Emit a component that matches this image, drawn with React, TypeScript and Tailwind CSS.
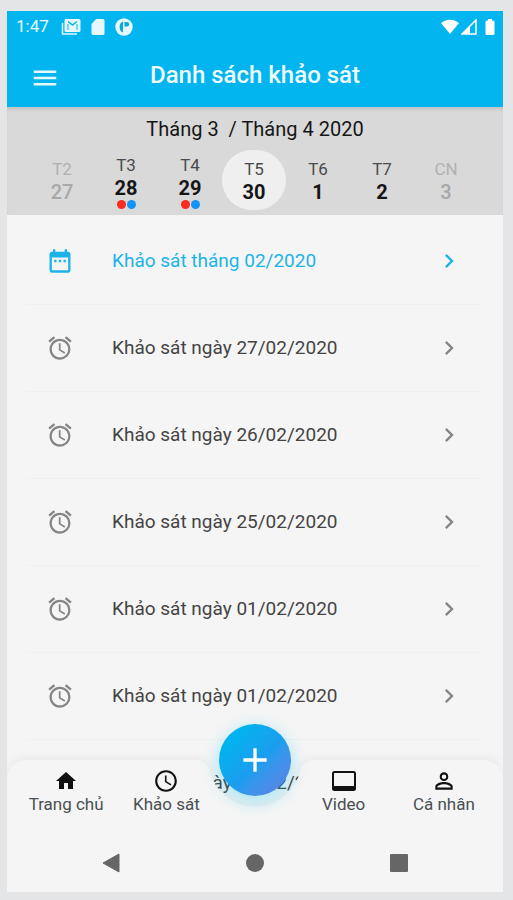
import type { ReactNode } from "react";
import {
  MdAccessTime,
  MdAdd,
  MdAlarm,
  MdChevronRight,
  MdDateRange,
  MdHome,
  MdMenu,
  MdPersonOutline,
} from "react-icons/md";

type Day = { name: string; date: number; state?: "muted" | "selected"; marked?: boolean };

const days: Day[] = [
  { name: "T2", date: 27, state: "muted" },
  { name: "T3", date: 28, marked: true },
  { name: "T4", date: 29, marked: true },
  { name: "T5", date: 30, state: "selected" },
  { name: "T6", date: 1 },
  { name: "T7", date: 2 },
  { name: "CN", date: 3, state: "muted" },
];

const surveys = [
  { title: "Khảo sát tháng 02/2020", monthly: true },
  { title: "Khảo sát ngày 27/02/2020" },
  { title: "Khảo sát ngày 26/02/2020" },
  { title: "Khảo sát ngày 25/02/2020" },
  { title: "Khảo sát ngày 01/02/2020" },
  { title: "Khảo sát ngày 01/02/2020" },
  { title: "Khảo sát ngày 01/02/2020" },
];

function StatusBar() {
  return (
    <div className="flex h-8 items-center pr-2 pl-[9px] text-[17px] text-white/90">
      <span>1:47</span>
      <div className="ml-3 flex items-center gap-2">
        <svg viewBox="0 0 20 18" className="h-[18px] w-5">
          <path d="M1.500 5v11H16" fill="none" stroke="currentColor" strokeWidth="1.500" />
          <rect x="3.500" y="1" width="16" height="13" rx="1.500" fill="currentColor" />
          <path d="M7 3.500l4.500 3.500L16 3.500" fill="none" stroke="#03b5ef" strokeWidth="1.500" />
          <path d="M7 6v6M16 6v6" fill="none" stroke="#03b5ef" />
        </svg>
        <svg viewBox="0 0 18 18" className="size-[18px]" fill="currentColor">
          <path d="M7 1h7a1.500 1.500 0 0 1 1.500 1.500v13A1.500 1.500 0 0 1 14 17H4a1.500 1.500 0 0 1-1.500-1.500V6z" />
        </svg>
        <svg viewBox="0 0 18 18" className="size-[18px]">
          <circle cx="9" cy="9" r="8.700" fill="currentColor" />
          <path
            d="M8 3.500C3.500 4.500 3.500 13.500 8 14.500zM9.500 4H12a2.200 2.200 0 0 1 0 4.400H9.500z"
            fill="#03a9e3"
          />
        </svg>
      </div>
      <div className="ml-auto flex items-center text-white">
        <svg viewBox="0 0 18 16" className="h-4 w-[18px]" fill="currentColor">
          <path d="M0 4C5-.5 13-.5 18 4L9 15z" />
        </svg>
        <svg viewBox="0 0 16 16" className="ml-[2px] size-4">
          <path d="M15 1v14H1z" fill="none" stroke="currentColor" strokeWidth="1.500" />
          <path d="M9 7v8H1z" fill="currentColor" />
        </svg>
        <svg viewBox="0 0 10 16" className="ml-2 h-4 w-[10px]" fill="currentColor">
          <path d="M3 0h4v1.500h1a1.500 1.500 0 0 1 1.500 1.500v11.500A1.500 1.500 0 0 1 8 16H2a1.500 1.500 0 0 1-1.500-1.500V3A1.500 1.500 0 0 1 2 1.500h1z" />
        </svg>
      </div>
    </div>
  );
}

function DayCell({ name, date, state, marked }: Day) {
  const muted = state === "muted";
  return (
    <button
      type="button"
      className={`flex h-[60px] flex-1 flex-col items-center rounded-full ${marked ? "pt-1" : "pt-2"} ${
        state === "selected" ? "bg-[#efefef]" : ""
      }`}
    >
      <span className={`text-[17px] leading-[23px] ${muted ? "text-[#b0b0b0]" : "text-[#4a4a4a]"}`}>{name}</span>
      <span
        className={`text-[20px] leading-[23px] ${muted ? "font-medium text-[#a8a8a8]" : "font-bold text-[#161616]"}`}
      >
        {date}
      </span>
      {marked && (
        <span className="flex gap-px">
          <span className="size-[9px] rounded-full bg-[#f92c22]" />
          <span className="size-[9px] rounded-full bg-[#1593f5]" />
        </span>
      )}
    </button>
  );
}

function NavItem({ label, icon }: { label: string; icon: ReactNode }) {
  return (
    <button type="button" className="flex flex-1 flex-col items-center pt-2 text-[#111]">
      <span className="flex h-[26px] items-center">{icon}</span>
      <span className="text-[17px] leading-5 whitespace-nowrap text-[#4a4f52]">{label}</span>
    </button>
  );
}

export default function App() {
  return (
    <div className="min-h-screen bg-[#e4e5e7] pt-[11px] pr-[10px] pb-2 pl-[7px] font-[Roboto,'Noto_Sans',sans-serif]">
      <div className="overflow-hidden bg-[#f5f5f5]">
        <header className="bg-[#03b5ef]">
          <StatusBar />
          <div className="grid h-16 grid-cols-[56px_1fr_56px] items-center">
            <button type="button" aria-label="Menu" className="pt-1.5 pl-[23px] text-[30px] text-white/90">
              <MdMenu />
            </button>
            <h1 className="text-center text-[24px] font-medium text-white/95">Danh sách khảo sát</h1>
          </div>
        </header>

        <section className="h-[108px] bg-[#d9d9d9] pt-2 shadow-[inset_0_4px_4px_-2px_rgba(0,0,0,0.12)]">
          <h2 className="h-[35px] text-center text-[20px] leading-7 whitespace-pre text-[#161616]">
            {"Tháng 3  / Tháng 4 2020"}
          </h2>
          <div className="flex pr-[25px] pl-[23px]">
            {days.map((day) => (
              <DayCell key={day.name} {...day} />
            ))}
          </div>
        </section>

        <ul className="px-5 pt-[3px]">
          {surveys.map((survey, index) => (
            <li key={index} className="h-[87px] border-b border-[#f0f0f0]">
              <a
                href="#survey"
                className={`flex h-full items-center pr-5 pl-[19px] text-[19px] ${
                  survey.monthly ? "text-[#1cb4e8]" : "text-[#444]"
                }`}
              >
                <span className={`text-[28px] ${survey.monthly ? "" : "text-[#858585]"}`}>
                  {survey.monthly ? <MdDateRange /> : <MdAlarm />}
                </span>
                <span className="flex-1 pl-[38px]">{survey.title}</span>
                <MdChevronRight className={`text-[28px] ${survey.monthly ? "" : "text-[#858585]"}`} />
              </a>
            </li>
          ))}
        </ul>

        <nav className="relative -mt-[67px] h-[74px]">
          <div className="absolute inset-0 flex drop-shadow-[0_-2px_5px_rgba(0,0,0,0.05)]">
            <div className="flex-1 rounded-tl-[20px] rounded-tr-[14px] bg-[#f5f5f5]" />
            <div className="w-[90px] bg-[#f5f5f5] mask-[radial-gradient(circle_at_50%_0,transparent_46px,black_47px)]" />
            <div className="flex-1 rounded-tl-[14px] rounded-tr-[20px] bg-[#f5f5f5]" />
          </div>
          <div className="relative flex h-full px-[9px]">
            <NavItem label="Trang chủ" icon={<MdHome size={24} />} />
            <NavItem label="Khảo sát" icon={<MdAccessTime size={26} />} />
            <div className="w-[77px]" />
            <NavItem
              label="Video"
              icon={
                <svg viewBox="0 0 24 20" className="h-5 w-6">
                  <rect x="1" y="1" width="22" height="18" rx="1.500" fill="none" stroke="currentColor" strokeWidth="2" />
                  <path d="M1 15h22v4H1z" fill="currentColor" />
                </svg>
              }
            />
            <NavItem label="Cá nhân" icon={<MdPersonOutline size={26} />} />
          </div>
          <button
            type="button"
            aria-label="Thêm khảo sát"
            className="absolute -top-9 left-1/2 flex size-[72px] -translate-x-1/2 items-center justify-center rounded-full bg-linear-135 from-[#00b2ee] from-20% via-[#1b9dee] via-55% to-[#5585e6] to-90% text-[40px] text-white shadow-[0_5px_16px_2px_rgba(0,200,240,0.3)]"
          >
            <MdAdd />
          </button>
        </nav>

        <footer className="relative grid h-[58px] grid-cols-[1fr_1fr_1fr] items-center justify-items-center bg-[#f5f5f5] px-8 text-[#666]">
          <button type="button" aria-label="Quay lại">
            <svg viewBox="0 0 18 20" className="h-5 w-[18px]" fill="currentColor">
              <path d="M17 1v18L1 10z" stroke="currentColor" strokeLinejoin="round" />
            </svg>
          </button>
          <button type="button" aria-label="Màn hình chính" className="size-[18px] rounded-full bg-[#666]" />
          <button type="button" aria-label="Gần đây" className="size-[18px] rounded-[1px] bg-[#666]" />
        </footer>
      </div>
    </div>
  );
}
